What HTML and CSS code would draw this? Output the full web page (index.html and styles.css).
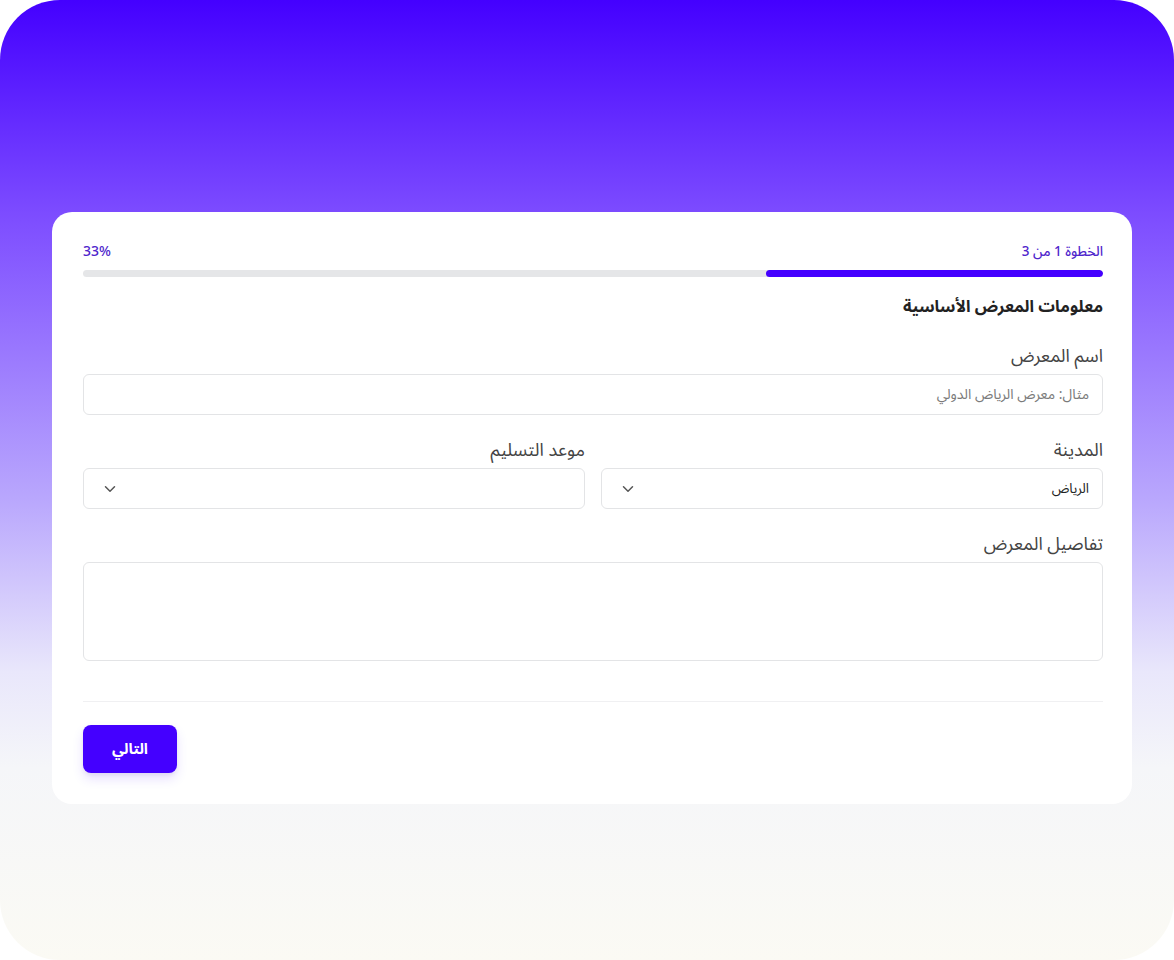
FILE: index.html
```html
<!DOCTYPE html>
<html lang="ar" dir="rtl">
<head>
<meta charset="utf-8">
<title>معلومات المعرض</title>
<link rel="stylesheet" href="styles.css">
</head>
<body>
<div class="page">
  <main class="card">
    <div class="progress-head">
      <span class="step">الخطوة 1 من 3</span>
      <span class="pct">33%</span>
    </div>
    <div class="track"><div class="fill" style="width:33%"></div></div>

    <h2 class="title">معلومات المعرض الأساسية</h2>

    <div class="field first">
      <label class="label">اسم المعرض</label>
      <div class="input"><span class="placeholder">مثال: معرض الرياض الدولي</span></div>
    </div>

    <div class="row">
      <div class="field">
        <label class="label">المدينة</label>
        <div class="input select">
          <span class="value">الرياض</span>
          <svg class="chev" width="12" height="8" viewBox="0 0 12 8"><path d="M1.5 1.8 L6 6.2 L10.5 1.8" fill="none" stroke="#555" stroke-width="1.5" stroke-linecap="round" stroke-linejoin="round"/></svg>
        </div>
      </div>
      <div class="field">
        <label class="label">موعد التسليم</label>
        <div class="input select">
          <span class="value"></span>
          <svg class="chev" width="12" height="8" viewBox="0 0 12 8"><path d="M1.5 1.8 L6 6.2 L10.5 1.8" fill="none" stroke="#555" stroke-width="1.5" stroke-linecap="round" stroke-linejoin="round"/></svg>
        </div>
      </div>
    </div>

    <div class="field">
      <label class="label">تفاصيل المعرض</label>
      <div class="input textarea"></div>
    </div>

    <div class="footer">
      <button class="btn">التالي</button>
    </div>
  </main>
</div>
</body>
</html>
```
FILE: styles.css
```css
html, body {
  margin: 0;
  padding: 0;
  background: #ffffff;
}
body {
  font-family: "Noto Sans Arabic", "DejaVu Sans", "Noto Sans", sans-serif;
  color: #222;
}
.page {
  width: 1174px;
  height: 960px;
  box-sizing: border-box;
  border-radius: 60px;
  background: linear-gradient(180deg, #4400ff 0%, #7c4bff 22%, #b9a7fd 52%, #e9e7fb 70%, #f5f6f9 80%, #fbfaf4 100%);
  padding: 212px 42px 0 52px;
}
.card {
  display: block;
  box-sizing: border-box;
  background: #fff;
  border-radius: 20px;
  padding: 30px 29px 31px 31px;
}
.progress-head {
  display: flex;
  justify-content: space-between;
  align-items: center;
  color: #4f26cc;
  font-weight: 500;
  height: 20px;
  line-height: 20px;
}
.step { font-size: 13.5px; }
.pct { font-size: 14px; }
.track {
  margin-top: 8px;
  height: 7px;
  border-radius: 4px;
  background: #e5e6e8;
  overflow: hidden;
  display: flex;
}
.fill {
  background: #4400ff;
  border-radius: 4px;
  height: 100%;
}
.title {
  margin: 18px 0 0;
  font-size: 16.5px;
  font-weight: 700;
  line-height: 24px;
  color: #222;
}
.field {
  display: flex;
  flex-direction: column;
  margin-top: 24px;
}
.field.first { margin-top: 26px; }
.row .field { margin-top: 0; flex: 1; }
.row {
  display: flex;
  gap: 16px;
  margin-top: 24px;
}
.label {
  font-size: 18px;
  line-height: 22px;
  color: #444;
  margin-bottom: 7px;
}
.input {
  height: 41px;
  box-sizing: border-box;
  border: 1px solid #e3e4e6;
  border-radius: 6px;
  background: #fff;
  display: flex;
  align-items: center;
  padding: 0 13px;
}
.placeholder {
  font-size: 14px;
  color: #7a7a7a;
}
.select {
  justify-content: space-between;
  padding: 0 13px 0 20px;
}
.value {
  font-size: 13.5px;
  color: #222;
}
.chev { display: block; }
.textarea {
  height: 99px;
}
.footer {
  margin-top: 40px;
  border-top: 1px solid #f0f0f2;
  padding-top: 23px;
  display: flex;
  justify-content: flex-end;
}
.btn {
  width: 94px;
  height: 48px;
  border: none;
  border-radius: 8px;
  background: #4400ff;
  color: #fff;
  font-family: inherit;
  font-size: 15px;
  font-weight: 700;
  box-shadow: 0 6px 12px rgba(68, 0, 255, 0.12), 0 2px 4px rgba(0, 0, 0, 0.06);
}
```
